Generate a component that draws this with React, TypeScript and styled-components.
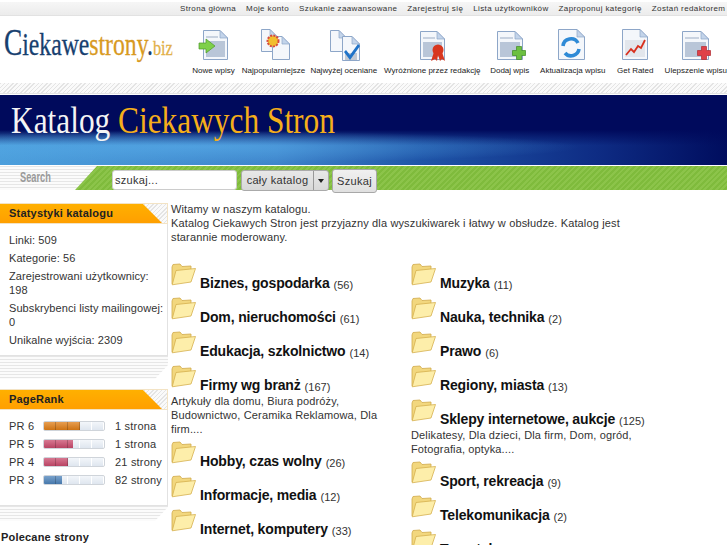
import React from 'react';
import styled, { createGlobalStyle } from 'styled-components';

const GlobalStyle = createGlobalStyle`
  html, body { margin: 0; padding: 0; background: #fff; overflow: hidden; }
  body { font-family: "Liberation Sans", Arial, sans-serif; font-size: 11px; color: #222; }
  * { box-sizing: border-box; }
`;

const Page = styled.div`
  width: 727px;
  height: 545px;
  overflow: hidden;
`;

const hatch = `repeating-linear-gradient(135deg, #e4e4e4 0 1px, #fafafa 1px 3px)`;
const lines = `repeating-linear-gradient(180deg, #e6e6e6 0 1px, #fbfbfb 1px 3px)`;

/* top menu */
const TopNav = styled.nav`
  height: 13px;
  margin-top: 2px;
  padding-left: 180px;
  display: flex;
  gap: 10px;
  align-items: center;
  white-space: nowrap;
  background: linear-gradient(180deg, #f6f6f6, #ececec);
  font-size: 8px;
  letter-spacing: 0.38px;
  color: #333;
`;

const Masthead = styled.header`
  height: 68px;
  display: flex;
  border-top: 1px solid #e2e2e2;
`;

const Logo = styled.div`
  width: 188px;
  flex: none;
  padding: 5px 0 0 4px;
  font-family: "Liberation Serif", serif;
  font-size: 32px;
  line-height: 44px;
  white-space: nowrap;
  color: #17406f;
  -webkit-text-stroke: 0.3px currentColor;
`;

const LogoMark = styled.span`
  display: inline-block;
  transform: scaleX(0.74);
  transform-origin: left center;
  b { font-weight: normal; font-size: 37px; }
  span { color: #d89a1f; }
  small { font-size: 22px; color: #e2b04a; }
`;

const Shortcuts = styled.ul`
  list-style: none;
  margin: 0;
  padding: 0;
  display: flex;
  white-space: nowrap;
`;

const Shortcut = styled.li<{ $width: number }>`
  width: ${(p) => p.$width}px;
  display: flex;
  flex-direction: column;
  align-items: center;
  padding-top: 13px;
  font-size: 8px;
  color: #222;
  svg { display: block; margin-bottom: 4px; }
`;

const HatchBand = styled.div`
  height: 11px;
  background: ${hatch};
  border-bottom: 1px solid #e4e4e4;
`;

const Banner = styled.div`
  height: 70px;
  margin-top: 1px;
  padding: 3px 0 0 11px;
  background:
    radial-gradient(ellipse 380px 16px at 200px 52px, rgba(90, 175, 235, 0.55), rgba(90, 175, 235, 0)),
    linear-gradient(180deg, #000a5c 0, #000a5c 50%, rgba(0, 10, 92, 0) 72%),
    linear-gradient(90deg, #4c9fdc 0, #3f86cc 38%, #1f55a8 58%, #0e2c84 82%, #000d5e 100%);
  font-family: "Liberation Serif", serif;
  font-size: 38px;
  line-height: 44px;
  white-space: nowrap;
  color: #f4f4f4;
`;

const BannerTitle = styled.div`
  display: inline-block;
  transform: scaleX(0.825);
  transform-origin: left center;
  span { color: #f5ae1a; }
`;

const SearchBar = styled.form`
  height: 24px;
  margin-top: 1px;
  display: flex;
  background: repeating-linear-gradient(135deg, #7fbb3c 0 2px, #8cc44a 2px 4px);
`;

const SearchLabel = styled.div`
  width: 97px;
  flex: none;
  padding: 3px 0 0 20px;
  background: ${lines};
  clip-path: polygon(0 0, 100% 0, 75px 100%, 0 100%);
  font-size: 14px;
  font-weight: bold;
  color: #999;
  span {
    display: inline-block;
    transform: scaleX(0.66);
    transform-origin: left center;
  }
`;

const SearchControls = styled.div`
  display: flex;
  align-items: flex-start;
  padding: 4px 0 0 15px;
  height: 28px;
`;

const SearchInput = styled.div`
  width: 125px;
  height: 20px;
  padding: 0 2px;
  line-height: 19px;
  font-size: 11px;
  letter-spacing: 0.3px;
  background: #fff;
  border: 1px solid #ccc;
  border-radius: 3px;
  color: #333;
`;

const SelectBox = styled.div`
  display: flex;
  height: 21px;
  margin-left: 4px;
  border: 1px solid #aaa;
  border-radius: 3px;
  background: linear-gradient(180deg, #e8e8e8, #d8d8d8);
  line-height: 19px;
  font-size: 11px;
  letter-spacing: 0.3px;
  color: #333;
`;

const SelectValue = styled.div`
  width: 72px;
  text-align: center;
  border-right: 1px solid #999;
`;

const SelectArrow = styled.div`
  width: 14px;
  display: flex;
  align-items: center;
  justify-content: center;
  &::before {
    content: '';
    border: 3px solid transparent;
    border-top: 4px solid #222;
    border-bottom: 0;
  }
`;

const SearchButton = styled.div`
  width: 45px;
  height: 24px;
  margin: -1px 0 0 3px;
  border: 1px solid #a8a8a8;
  border-radius: 3px;
  background: linear-gradient(180deg, #f0f0f0, #e0e0e0);
  text-align: center;
  line-height: 22px;
  font-size: 11px;
  letter-spacing: 0.3px;
  color: #333;
`;

/* two column body */
const Body = styled.div`
  display: flex;
  padding-top: 13px;
`;

const Sidebar = styled.aside`
  width: 168px;
  flex: none;
`;

const Panel = styled.section`
  margin-bottom: 10px;
`;

const PanelHead = styled.div`
  height: 21px;
  background: ${hatch};
  border: 1px solid #f3e3c4;
  border-left: 0;
`;

const PanelTitle = styled.h3`
  margin: 0;
  height: 100%;
  width: 162px;
  padding-left: 9px;
  line-height: 19px;
  font-size: 11px;
  letter-spacing: 0.2px;
  font-weight: bold;
  color: #222;
  background: linear-gradient(180deg, #ffb000, #ff9f00);
  clip-path: polygon(0 0, 143px 0, 100% 100%, 0 100%);
`;

const PanelBody = styled.div<{ $height: number; $top: number }>`
  height: ${(p) => p.$height}px;
  padding: ${(p) => p.$top}px 2px 0 9px;
  border-right: 1px solid #e2e2e2;
  border-bottom: 1px solid #e2e2e2;
  color: #333;
`;

const PanelTail = styled.div<{ $height: number }>`
  height: ${(p) => p.$height}px;
  width: 168px;
  background: ${lines};
  clip-path: polygon(0 0, 100% 0, 100% calc(100% - 14px), 155px 100%, 0 100%);
`;

const StatLine = styled.p`
  margin: 0 0 4px;
  line-height: 14px;
  letter-spacing: 0.08px;
`;

const RankRow = styled.div`
  display: flex;
  align-items: center;
  height: 18px;
  letter-spacing: 0.2px;
  white-space: nowrap;
`;

const RankName = styled.span`
  width: 34px;
`;

const RankBar = styled.span`
  width: 62px;
  height: 10px;
  margin-right: 10px;
  border: 1px solid #cfd4da;
  border-radius: 2px;
  background:
    repeating-linear-gradient(90deg, transparent 0 11px, #fff 11px 12px),
    linear-gradient(180deg, #f3f6fa, #dfe6ef);
  overflow: hidden;
`;

const RankFill = styled.span<{ $width: number; $color: string }>`
  display: block;
  height: 100%;
  width: ${(p) => p.$width}px;
  background:
    repeating-linear-gradient(90deg, transparent 0 11px, rgba(0, 0, 0, 0.2) 11px 12px),
    linear-gradient(180deg, rgba(255, 255, 255, 0.25), rgba(0, 0, 0, 0.08)),
    ${(p) => p.$color};
`;

const SideHeading = styled.div`
  margin: 0 0 0 1px;
  font-weight: bold;
  letter-spacing: 0.2px;
  color: #222;
`;

const Main = styled.main`
  flex: 1;
  margin: -1px 0 0 3px;
`;

const Intro = styled.div`
  height: 58px;
  width: 456px;
  line-height: 14px;
  letter-spacing: 0.14px;
  color: #333;
`;

const Columns = styled.div`
  display: flex;
`;

const CategoryColumn = styled.div`
  width: 240px;
  flex: none;
`;

const CategoryRow = styled.div`
  display: flex;
  align-items: flex-end;
  height: 34px;
  padding-bottom: 3px;
  svg { flex: none; margin: 0 4px 5px 0; }
`;

const CategoryName = styled.a`
  font-size: 14px;
  font-weight: bold;
  letter-spacing: -0.15px;
  color: #111;
  white-space: nowrap;
`;

const CategoryCount = styled.span`
  margin-left: 4px;
  font-size: 11px;
  color: #333;
`;

const CategoryDesc = styled.p`
  width: 228px;
  margin: -2px 0 2px;
  line-height: 14px;
  letter-spacing: 0.14px;
  color: #333;
`;

/* drawings */
const Folder = () => (
  <svg width="25" height="23" viewBox="0 0 25 23">
    <path d="M1 4 L2 1.5 L9 1 L11 3.5 L20 3 L20 7 L3 20 L1 21 Z" fill="#f2d77e" stroke="#d0a94a" strokeWidth="0.8" />
    <path d="M5 7.5 L24.5 5.5 L20 19 L1.2 21.8 Z" fill="#fdeeaa" stroke="#d6b04e" strokeWidth="0.8" />
  </svg>
);

const Doc = ({ x, y, w, h, picture }: { x: number; y: number; w: number; h: number; picture?: boolean }) => (
  <g>
    <path
      d={`M${x + 0.5} ${y + 0.5} H${x + w - 8} L${x + w - 0.5} ${y + 8} V${y + h - 0.5} H${x + 0.5} Z`}
      fill="#f4f7fb"
      stroke="#8da6c8"
    />
    <path d={`M${x + w - 8} ${y + 0.5} V${y + 8} H${x + w - 0.5} Z`} fill="#c3d4ea" stroke="#8da6c8" strokeWidth="0.7" />
    {picture && (
      <g>
        <rect x={x + 3} y={y + 6} width={w - 13} height="2" fill="#c8d2e0" />
        <rect x={x + 3} y={y + 11} width={w - 6} height={h - 14} fill="#b9c6d8" />
      </g>
    )}
  </g>
);

type IconKind = 'arrow' | 'seal' | 'check' | 'ribbon' | 'plus' | 'refresh' | 'chart' | 'cross';

const ShortcutIcon = ({ kind }: { kind: IconKind }) => {
  const plusShape = 'M-2.5 -6.5 H2.5 V-2.5 H6.5 V2.5 H2.5 V6.5 H-2.5 V2.5 H-6.5 V-2.5 H-2.5 Z';
  return (
    <svg width="34" height="33" viewBox="0 0 34 33">
      {kind === 'arrow' && (
        <g>
          <Doc x={6} y={1} w={25} h={30} picture />
          <path d="M2 14 H9 V10 L18 17 L9 24 V20 H2 Z" fill="#7ed04a" stroke="#4a9a28" strokeWidth="0.7" />
        </g>
      )}
      {kind === 'seal' && (
        <g>
          <Doc x={4} y={0} w={17} h={23} />
          <Doc x={15} y={7} w={18} h={24} />
          <circle cx="16" cy="12" r="5.5" fill="#f2be2e" stroke="#d84a40" strokeWidth="2" strokeDasharray="2 1.2" />
        </g>
      )}
      {kind === 'check' && (
        <g>
          <Doc x={3} y={1} w={17} h={22} />
          <Doc x={15} y={7} w={18} h={25} />
          <rect x="18" y="24" width="12" height="7" fill="#c2c9d2" />
          <path d="M19 21 L23 26 L31 15 L33 17 L23 31 L17 23 Z" fill="#1f73c8" />
        </g>
      )}
      {kind === 'ribbon' && (
        <g>
          <Doc x={5} y={2} w={25} h={29} picture />
          <g fill="#d8361e">
            <circle cx="23" cy="21" r="5.5" />
            <path d="M19 23 L16 32 L20 30 L22 32 L23 26 L25 32 L27 30 L30 32 L27 23 Z" />
          </g>
        </g>
      )}
      {kind === 'plus' && (
        <g>
          <Doc x={4} y={2} w={26} h={29} picture />
          <path d={plusShape} transform="translate(26 24)" fill="#6cc040" stroke="#3f8a22" strokeWidth="0.7" />
        </g>
      )}
      {kind === 'refresh' && (
        <g>
          <Doc x={2} y={0} w={27} h={31} />
          <g fill="none" stroke="#2e8ad6" strokeWidth="3.6">
            <path d="M7 17 A8 8 0 0 1 22 14" />
            <path d="M23 20 A8 8 0 0 1 9 24" />
          </g>
        </g>
      )}
      {kind === 'chart' && (
        <g>
          <Doc x={4} y={0} w={26} h={31} />
          <rect x="7" y="11" width="20" height="17" fill="#e2e6ec" />
          <path d="M8 26 L13 20 L16 23 L20 17 L23 19 L27 11" fill="none" stroke="#d8301e" strokeWidth="1.8" />
        </g>
      )}
      {kind === 'cross' && (
        <g>
          <Doc x={3} y={2} w={27} h={29} picture />
          <path d={plusShape} transform="translate(25 24)" fill="#e04048" stroke="#b02a30" strokeWidth="0.7" />
        </g>
      )}
    </svg>
  );
};

/* data */
const topLinks = ['Strona główna', 'Moje konto', 'Szukanie zaawansowane', 'Zarejestruj się', 'Lista użytkowników', 'Zaproponuj kategorię', 'Zostań redaktorem'];

const shortcuts: { label: string; kind: IconKind; width: number }[] = [
  { label: 'Nowe wpisy', kind: 'arrow', width: 51 },
  { label: 'Najpopularniejsze', kind: 'seal', width: 69 },
  { label: 'Najwyżej oceniane', kind: 'check', width: 71.5 },
  { label: 'Wyróżnione przez redakcję', kind: 'ribbon', width: 105.5 },
  { label: 'Dodaj wpis', kind: 'plus', width: 49.5 },
  { label: 'Aktualizacja wpisu', kind: 'refresh', width: 76.5 },
  { label: 'Get Rated', kind: 'chart', width: 48.5 },
  { label: 'Ulepszenie wpisu', kind: 'cross', width: 72.5 },
];

const ranks = [
  { name: 'PR 6', width: 36, color: '#df7d16', pages: '1 strona' },
  { name: 'PR 5', width: 29, color: '#c94a6c', pages: '1 strona' },
  { name: 'PR 4', width: 24, color: '#c94a6c', pages: '21 strony' },
  { name: 'PR 3', width: 18, color: '#4c82ba', pages: '82 strony' },
];

type Category = { name: string; count?: number; desc?: string };

const leftCategories: Category[] = [
  { name: 'Biznes, gospodarka', count: 56 },
  { name: 'Dom, nieruchomości', count: 61 },
  { name: 'Edukacja, szkolnictwo', count: 14 },
  { name: 'Firmy wg branż', count: 167, desc: 'Artykuły dla domu, Biura podróży, Budownictwo, Ceramika Reklamowa, Dla firm....' },
  { name: 'Hobby, czas wolny', count: 26 },
  { name: 'Informacje, media', count: 12 },
  { name: 'Internet, komputery', count: 33 },
];

const rightCategories: Category[] = [
  { name: 'Muzyka', count: 11 },
  { name: 'Nauka, technika', count: 2 },
  { name: 'Prawo', count: 6 },
  { name: 'Regiony, miasta', count: 13 },
  { name: 'Sklepy internetowe, aukcje', count: 125, desc: 'Delikatesy, Dla dzieci, Dla firm, Dom, ogród, Fotografia, optyka....' },
  { name: 'Sport, rekreacja', count: 9 },
  { name: 'Telekomunikacja', count: 2 },
  { name: 'Turystyka', count: 20 },
];

const CategoryList = ({ items }: { items: Category[] }) => (
  <CategoryColumn>
    {items.map((item) => (
      <React.Fragment key={item.name}>
        <CategoryRow>
          <Folder />
          <CategoryName>{item.name}</CategoryName>
          <CategoryCount>({item.count})</CategoryCount>
        </CategoryRow>
        {item.desc && <CategoryDesc>{item.desc}</CategoryDesc>}
      </React.Fragment>
    ))}
  </CategoryColumn>
);

const App: React.FC = () => {
  return (
    <Page>
      <GlobalStyle />
      <TopNav>
        {topLinks.map((link) => (
          <span key={link}>{link}</span>
        ))}
      </TopNav>
      <Masthead>
        <Logo>
          <LogoMark>
            <b>C</b>iekawe<span>strony</span>.<small>biz</small>
          </LogoMark>
        </Logo>
        <Shortcuts>
          {shortcuts.map((item) => (
            <Shortcut key={item.label} $width={item.width}>
              <ShortcutIcon kind={item.kind} />
              {item.label}
            </Shortcut>
          ))}
        </Shortcuts>
      </Masthead>
      <HatchBand />
      <Banner>
        <BannerTitle>
          Katalog <span>Ciekawych Stron</span>
        </BannerTitle>
      </Banner>
      <SearchBar>
        <SearchLabel>
          <span>Search</span>
        </SearchLabel>
        <SearchControls>
          <SearchInput>szukaj...</SearchInput>
          <SelectBox>
            <SelectValue>cały katalog</SelectValue>
            <SelectArrow />
          </SelectBox>
          <SearchButton>Szukaj</SearchButton>
        </SearchControls>
      </SearchBar>
      <Body>
        <Sidebar>
          <Panel>
            <PanelHead>
              <PanelTitle>Statystyki katalogu</PanelTitle>
            </PanelHead>
            <PanelBody $height={132} $top={9}>
              <StatLine>Linki: 509</StatLine>
              <StatLine>Kategorie: 56</StatLine>
              <StatLine>Zarejestrowani użytkownicy: 198</StatLine>
              <StatLine>Subskrybenci listy mailingowej: 0</StatLine>
              <StatLine>Unikalne wyjścia: 2309</StatLine>
            </PanelBody>
            <PanelTail $height={23} />
          </Panel>
          <Panel>
            <PanelHead>
              <PanelTitle>PageRank</PanelTitle>
            </PanelHead>
            <PanelBody $height={96} $top={7}>
              {ranks.map((rank) => (
                <RankRow key={rank.name}>
                  <RankName>{rank.name}</RankName>
                  <RankBar>
                    <RankFill $width={rank.width} $color={rank.color} />
                  </RankBar>
                  {rank.pages}
                </RankRow>
              ))}
            </PanelBody>
            <PanelTail $height={15} />
          </Panel>
          <SideHeading>Polecane strony</SideHeading>
        </Sidebar>
        <Main>
          <Intro>
            Witamy w naszym katalogu.
            <br />
            Katalog Ciekawych Stron jest przyjazny dla wyszukiwarek i łatwy w obsłudze. Katalog jest starannie moderowany.
          </Intro>
          <Columns>
            <CategoryList items={leftCategories} />
            <CategoryList items={rightCategories} />
          </Columns>
        </Main>
      </Body>
    </Page>
  );
};

export default App;
